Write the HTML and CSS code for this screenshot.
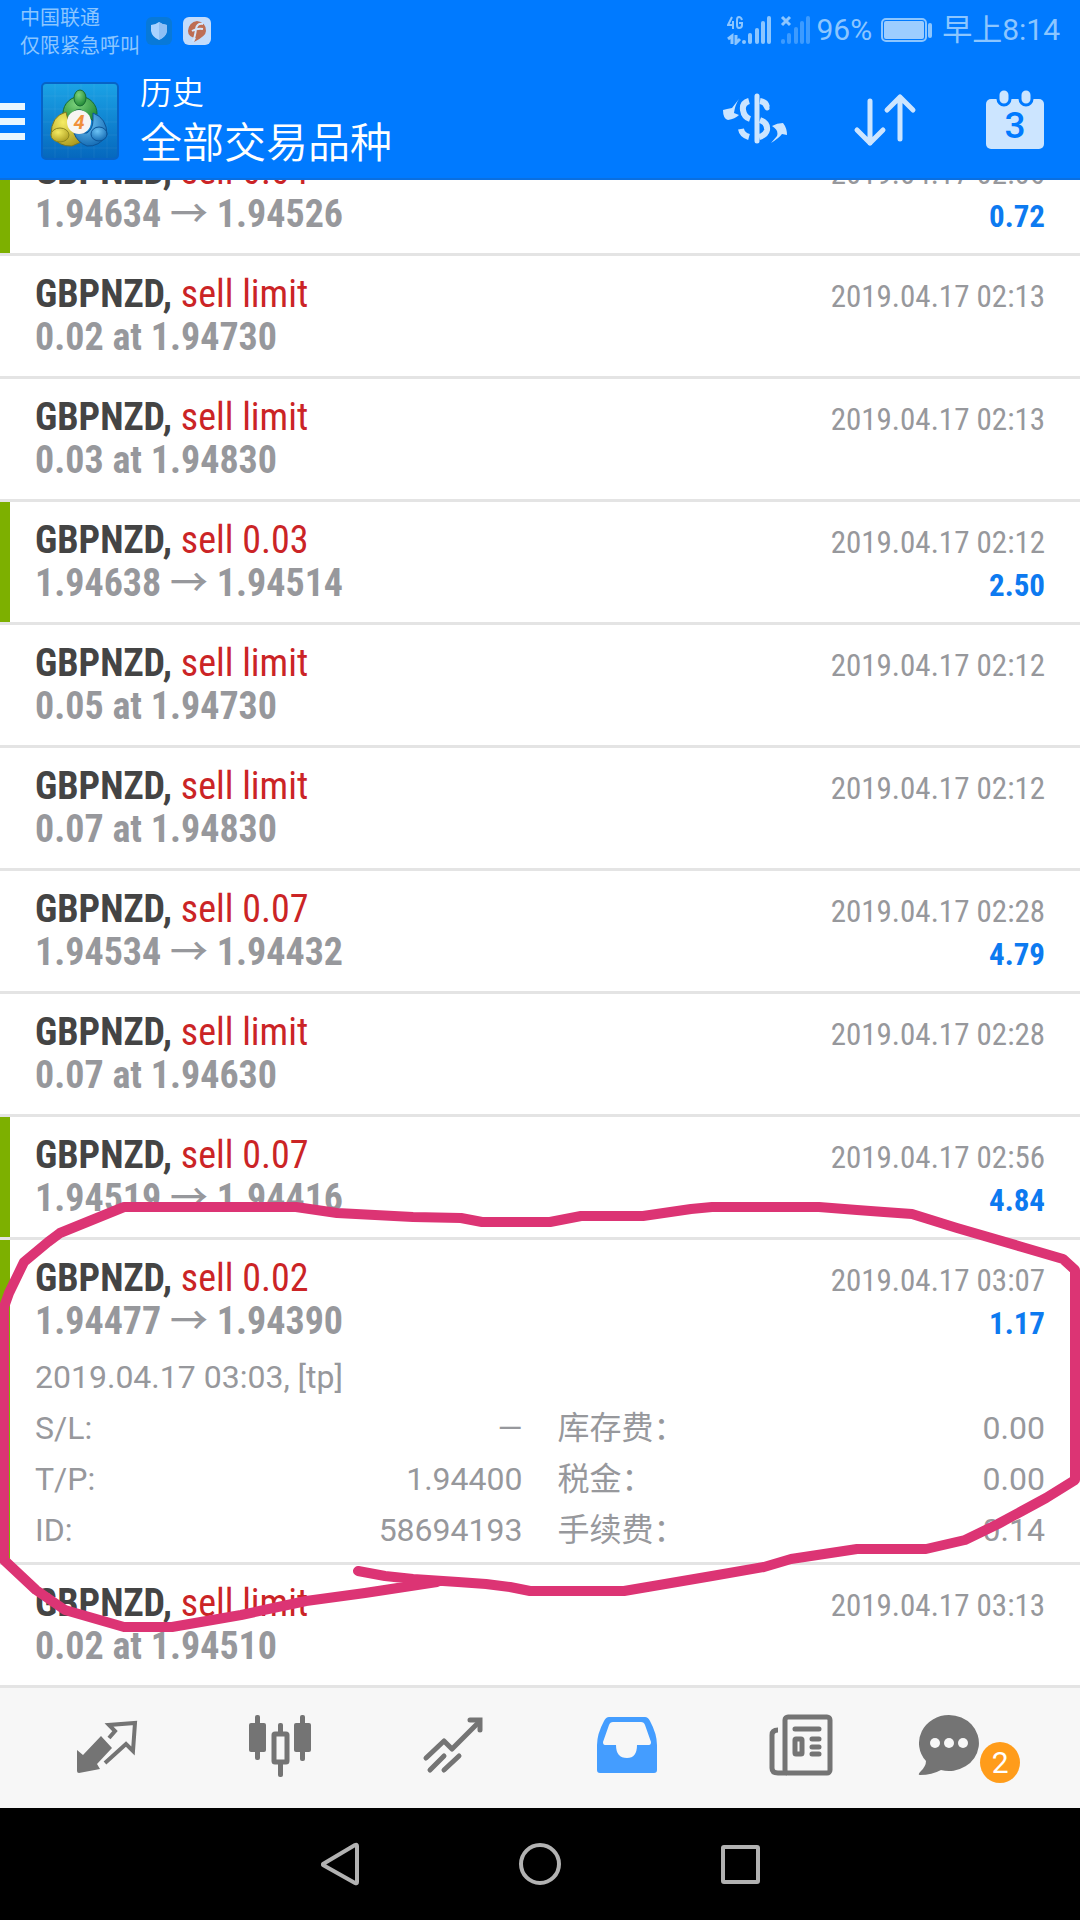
FILE: index.html
```html
<!DOCTYPE html>
<html lang="zh-CN">
<head>
<meta charset="utf-8">
<meta name="viewport" content="width=device-width, initial-scale=1">
<title>历史</title>
<link rel="stylesheet" href="styles.css">
</head>
<body>
<div class="screen">
  <div class="top">
    <div class="status">
      <div class="carrier"><span>中国联通</span><span>仅限紧急呼叫</span></div>
      <svg class="notice" width="26" height="28" viewBox="0 0 26 28"><rect width="26" height="28" rx="6" fill="#0879d8"/><path d="M13 5Q17 8 21 8V14Q20 20 13 23Q6 20 5 14V8Q9 8 13 5Z" fill="#a9d2ff"/><path d="M13 5Q17 8 21 8V14Q20 20 13 23Z" fill="#8ec0f5"/></svg>
      <svg class="notice" width="28" height="28" viewBox="0 0 28 28"><rect width="28" height="28" rx="6" fill="#c3dcfb"/><path d="M14 4A10 9 0 0 1 23 14Q23 19 11 25L13 21Q5 20 5 14A10 10 0 0 1 14 4Z" fill="#bd6d54"/><path d="M10 24Q12 20 13 12Q14 6 20 7M9 14Q14 11 20 12" fill="none" stroke="#d6e6fb" stroke-width="2"/></svg>
      <div class="status-right">
        <svg width="84" height="30" viewBox="0 0 84 30" fill="#8cc6ff">
          <g fill="none" stroke="#8cc6ff" stroke-width="2"><path d="M5 2L1 10H7M6 6V14M15 5Q14 2 12 2Q10 2 10 5V10Q10 13 12 13Q15 13 15 10V8H12"/><path d="M1 24L5 21V29M9 20V28L13 24" stroke-width="3"/></g>
          <rect x="15" y="25" width="4" height="4" rx="2"/><rect x="21" y="18" width="4" height="11" rx="2"/><rect x="28" y="13" width="4" height="16" rx="2"/><rect x="34" y="6" width="4" height="23" rx="2"/><rect x="40" y="1" width="4" height="28" rx="2"/>
          <path d="M55 2L63 10M63 2L55 10" stroke="#8cc6ff" stroke-width="3"/>
          <g fill="#3d9bff"><rect x="54" y="24" width="4" height="5" rx="2"/><rect x="60" y="18" width="4" height="11" rx="2"/><rect x="67" y="12" width="4" height="17" rx="2"/><rect x="73" y="6" width="4" height="23" rx="2"/><rect x="79" y="1" width="4" height="28" rx="2"/></g>
        </svg>
        <span class="percent">96%</span>
        <svg width="52" height="24" viewBox="0 0 52 24"><rect x="1" y="1" width="44" height="22" rx="4" fill="none" stroke="#8cc6ff" stroke-width="2"/><rect x="3" y="3" width="40" height="18" rx="2" fill="#9ccdff"/><rect x="47" y="5" width="4" height="15" rx="2" fill="#8cc6ff"/></svg>
        <span>早上8:14</span>
      </div>
    </div>
    <header class="bar">
      <button class="menu" aria-label="菜单"><i></i><i></i><i></i></button>
      <svg class="logo" width="78" height="78" viewBox="0 0 78 78">
        <defs>
          <linearGradient id="sky" x1="0" y1="0" x2="0" y2="1"><stop offset="0" stop-color="#1ba3e6"/><stop offset="1" stop-color="#0567bd"/></linearGradient>
          <radialGradient id="green" cx=".4" cy=".3" r=".8"><stop offset="0" stop-color="#7dd37c"/><stop offset="1" stop-color="#15802d"/></radialGradient>
          <radialGradient id="gold" cx=".4" cy=".3" r=".8"><stop offset="0" stop-color="#f5ec63"/><stop offset="1" stop-color="#a7961c"/></radialGradient>
          <radialGradient id="blue" cx=".4" cy=".3" r=".8"><stop offset="0" stop-color="#6cc3f5"/><stop offset="1" stop-color="#0b62ad"/></radialGradient>
        </defs>
        <rect x="1" y="1" width="76" height="76" rx="4" fill="url(#sky)" stroke="#0763c6" stroke-width="2"/>
        <path d="M14 2V76M27 2V76M40 2V76M53 2V76M66 2V76M2 14H76M2 27H76M2 40H76M2 53H76M2 66H76" stroke="#fff" stroke-opacity=".06"/>
        <path d="M22 31A17 17 0 0 1 56 32L53 40L46 33Q39 23 31 31L26 38Z" fill="url(#green)" stroke="#176b33"/>
        <path d="M25 30Q10 34 10 53Q18 65 31 64L40 60L33 50Q27 47 27 38Z" fill="url(#gold)" stroke="#7d7720"/>
        <path d="M52 31Q66 36 66 53Q58 65 46 64Q36 60 33 51L46 51Q52 47 52 38Z" fill="url(#blue)" stroke="#0d5396"/>
        <ellipse cx="39" cy="16" rx="6" ry="8" fill="url(#green)" stroke="#176b33"/>
        <ellipse cx="19" cy="53" rx="9" ry="7" fill="url(#gold)" stroke="#8b851e"/>
        <ellipse cx="58" cy="52" rx="8" ry="7" fill="url(#blue)" stroke="#0d5396"/>
        <circle cx="38" cy="40" r="12" fill="#f7f5f3"/>
        <text x="38" y="47" text-anchor="middle" class="logo-text">4</text>
      </svg>
      <h1 class="title"><small>历史</small><span>全部交易品种</span></h1>
      <div class="tools">
        <button aria-label="货币"><svg width="68" height="64" viewBox="0 0 68 64" fill="none" stroke="#cce5ff" stroke-width="5" stroke-linecap="round"><path d="M36 9V54"/><path d="M46 20Q45 15 39 14M28 14Q21 16 22 23Q23 30 29 32M39 33Q47 36 46 43Q45 48 38 50M28 50Q21 48 20 42" stroke-linecap="butt" stroke-width="6"/><path d="M46 21L45 19" /><path d="M18 12L11 21L6 22L2 23Q2 32 7 33Q14 32 18 28L13 26Q14 18 18 12ZM50 56L56 49Q58 43 51 39Q56 36 62 36Q66 41 66 48L61 47Q58 51 50 56Z" fill="#cce5ff" stroke="none"/></svg></button>
        <button aria-label="排序"><svg width="68" height="64" viewBox="0 0 68 64" fill="none" stroke="#cce5ff" stroke-width="5" stroke-linecap="round" stroke-linejoin="round"><path d="M19 14V56M6 43L19 56L32 43M49 52V10M36 23L49 10L62 23"/></svg></button>
        <button aria-label="日期"><svg width="68" height="64" viewBox="0 0 68 64"><rect x="5" y="12" width="58" height="50" rx="5" fill="#cce5ff"/><g fill="#cce5ff" stroke="#007aff" stroke-width="3"><rect x="17" y="2" width="12" height="16" rx="6"/><rect x="39" y="2" width="12" height="16" rx="6"/></g><text x="34" y="51" text-anchor="middle" class="cal-text">3</text></svg></button>
      </div>
    </header>
  </div>

  <main class="history">
    <ul class="deals">
      <li class="deal win"><div><b>GBPNZD,</b> <em>sell 0.04</em></div><time>2019.04.17 02:06</time><div class="price">1.94634 <i>→</i> 1.94526</div><strong>0.72</strong></li>
      <li class="deal"><div><b>GBPNZD,</b> <em>sell limit</em></div><time>2019.04.17 02:13</time><div class="price">0.02 at 1.94730</div></li>
      <li class="deal"><div><b>GBPNZD,</b> <em>sell limit</em></div><time>2019.04.17 02:13</time><div class="price">0.03 at 1.94830</div></li>
      <li class="deal win"><div><b>GBPNZD,</b> <em>sell 0.03</em></div><time>2019.04.17 02:12</time><div class="price">1.94638 <i>→</i> 1.94514</div><strong>2.50</strong></li>
      <li class="deal"><div><b>GBPNZD,</b> <em>sell limit</em></div><time>2019.04.17 02:12</time><div class="price">0.05 at 1.94730</div></li>
      <li class="deal"><div><b>GBPNZD,</b> <em>sell limit</em></div><time>2019.04.17 02:12</time><div class="price">0.07 at 1.94830</div></li>
      <li class="deal"><div><b>GBPNZD,</b> <em>sell 0.07</em></div><time>2019.04.17 02:28</time><div class="price">1.94534 <i>→</i> 1.94432</div><strong>4.79</strong></li>
      <li class="deal"><div><b>GBPNZD,</b> <em>sell limit</em></div><time>2019.04.17 02:28</time><div class="price">0.07 at 1.94630</div></li>
      <li class="deal win"><div><b>GBPNZD,</b> <em>sell 0.07</em></div><time>2019.04.17 02:56</time><div class="price">1.94519 <i>→</i> 1.94416</div><strong>4.84</strong></li>
      <li class="deal win open"><div><b>GBPNZD,</b> <em>sell 0.02</em></div><time>2019.04.17 03:07</time><div class="price">1.94477 <i>→</i> 1.94390</div><strong>1.17</strong>
        <div class="details">
          <p>2019.04.17 03:03, [tp]</p>
          <dl>
            <div><dt>S/L:</dt><dd>—</dd></div><div><dt>库存费：</dt><dd>0.00</dd></div>
            <div><dt>T/P:</dt><dd>1.94400</dd></div><div><dt>税金：</dt><dd>0.00</dd></div>
            <div><dt>ID:</dt><dd>58694193</dd></div><div><dt>手续费：</dt><dd>0.14</dd></div>
          </dl>
        </div>
        <svg class="marker" viewBox="0 0 1080 440" preserveAspectRatio="none"><path d="M358 371L385 376L413 379L458 382L486 384L510 387L530 391H624L671 383L712 376L764 367L791 359L857 349H926L965 340L998 324L1022 311L1046 298L1075 280V70L1063 59L1022 47L957 28L912 14L884 12L857 10L819 7H712L691 9L643 16H581L550 22H482L461 18L413 17L337 13L296 7H124L60 33L48 42L24 62L9 93L4 107V360L36 390L65 410L124 427H172L241 415L306 401L365 393L437 382"/></svg>
      </li>
      <li class="deal"><div><b>GBPNZD,</b> <em>sell limit</em></div><time>2019.04.17 03:13</time><div class="price">0.02 at 1.94510</div></li>
    </ul>
  </main>

  <nav class="tabs">
    <button aria-label="报价"><svg viewBox="0 0 64 68"><path d="M2 36L8 41L26 22L37 34L22 50L25 55L4 59Q2 59 2 57Z" fill="#747474"/><path d="M34 24L40 17L34 11L60 9L58 37L51 30L30 49" fill="none" stroke="#747474" stroke-width="4"/></svg></button>
    <button aria-label="图表"><svg viewBox="0 0 64 68" fill="#747474"><rect x="1" y="9" width="17" height="29" rx="2"/><rect x="7" y="1" width="5" height="45" rx="2"/><rect x="46" y="9" width="17" height="29" rx="2"/><rect x="52" y="1" width="5" height="46" rx="2"/><rect x="30" y="9" width="5" height="12" rx="2"/><rect x="30" y="48" width="5" height="15" rx="2"/><rect x="26" y="20" width="13" height="28" rx="1" fill="none" stroke="#747474" stroke-width="5"/></svg></button>
    <button aria-label="交易"><svg viewBox="0 0 64 68" fill="none" stroke="#747474" stroke-width="5" stroke-linecap="round" stroke-linejoin="round"><path d="M4 44L22 27L30 35L56 9"/><path d="M48 6H58V16" stroke-linejoin="miter"/><path d="M8 56L22 42M22 56L37 42"/></svg></button>
    <button aria-label="历史" aria-current="page"><svg viewBox="0 0 64 68"><path fill-rule="evenodd" fill="#449dff" d="M13 3H49Q52 3 54 7Q61 20 61 31V56Q61 59 58 59H4Q1 59 1 56V31Q1 20 8 7Q10 3 13 3ZM17 8Q14 8 13 11L7 28Q7 31 9 31H20Q20 44 31 44Q41 44 41 31H53Q55 31 55 28L49 11Q48 8 45 8Z"/></svg></button>
    <button aria-label="新闻"><svg viewBox="0 0 64 68" fill="none" stroke="#747474" stroke-width="5"><rect x="16" y="3" width="45" height="56" rx="3"/><path d="M9 16Q3 16 3 21V54Q3 59 9 59H18"/><path d="M26 15H50M43 25H50M43 33H50M43 40H50" stroke-linecap="round"/><rect x="26" y="25" width="7" height="15" rx="1"/></svg></button>
    <button class="mail" aria-label="邮箱"><svg viewBox="0 0 64 68"><path d="M32 1A30 28 0 1 1 24 56Q15 61 3 61Q0 61 4 57Q9 52 9 47A30 28 0 0 1 32 1Z" fill="#747474"/><g fill="#f7f7f7"><circle cx="18" cy="29" r="5"/><circle cx="32" cy="29" r="5"/><circle cx="46" cy="29" r="5"/></g></svg><span class="badge">2</span></button>
  </nav>

  <div class="system">
    <button aria-label="返回"><svg width="44" height="44" viewBox="0 0 44 44"><path d="M5 22L37 3Q39 2 39 4V40Q39 42 37 41L5 23Z"/></svg></button>
    <button aria-label="主屏幕"><svg width="44" height="44" viewBox="0 0 44 44"><circle cx="22" cy="22" r="19"/></svg></button>
    <button aria-label="最近任务"><svg width="44" height="44" viewBox="0 0 44 44"><rect x="5" y="5" width="35" height="35" rx="1"/></svg></button>
  </div>
</div>
</body>
</html>
```
FILE: styles.css
```css
* { box-sizing: border-box; }
body, h1, ul, dl, dd, p { margin: 0; padding: 0; }
body { font-family: Roboto, "Noto Sans CJK SC", sans-serif; background: #000; }
button { padding: 0; border: 0; background: none; font: inherit; }
svg { display: block; flex: none; }
em, i { font-style: normal; }

.screen { display: flex; flex-direction: column; height: 100vh; }

/* Status bar and title bar */
.top { background: #007aff; border-bottom: 2px solid #0a6fe0; }
.status { display: flex; align-items: flex-start; height: 64px; padding: 4px 20px 0; color: #8cc6ff; }
.carrier { display: flex; flex-direction: column; font-size: 20px; line-height: 28px; font-weight: 400; margin-right: 6px; }
.notice { margin: 13px 11px 0 0; }
.status-right { display: flex; align-items: center; margin-left: auto; height: 52px; gap: 9px; font-size: 30px; line-height: 52px; font-weight: 400; }
.percent { margin-left: -4px; }
.bar { display: flex; align-items: center; height: 114px; padding-right: 31px; color: #fff; }
.menu { display: flex; flex-direction: column; gap: 8px; width: 25px; margin-right: 16px; }
.menu i { height: 7px; background: #e8f6ff; }
.title { display: flex; flex-direction: column; margin-left: 21px; padding-top: 4px; font-weight: 350; font-size: 42px; line-height: 60px; }
.title small { font-size: 32px; line-height: 42px; }
.tools { display: flex; gap: 62px; margin-left: auto; padding-bottom: 5px; }
.logo-text { font: italic 700 20px Roboto, sans-serif; fill: #f0903a; }
.cal-text { font: 500 37px Roboto, sans-serif; fill: #007aff; }

/* Deals, scrolled to the end */
.history { flex: 1; min-height: 0; display: flex; flex-direction: column; justify-content: flex-end; overflow: hidden; background: #fff; }
.deals { list-style: none; }
.deal { position: relative; display: grid; grid-template-columns: 1fr auto; grid-template-rows: 43px 43px; align-items: baseline; min-height: 123px; padding: 17px 35px; border-bottom: 3px solid #e4e4e4; font-family: "Roboto Condensed", Roboto, sans-serif; font-size: 38px; line-height: 43px; }
.win::before { content: ""; position: absolute; left: 0; top: 0; bottom: 0; width: 10px; background: #7db000; }
.deal b { color: #444; }
.deal em { color: #cb2426; }
.deal time, .deal strong { font-size: 31px; text-align: right; }
.deal time, .price { color: #97989c; }
.price { font-weight: 700; }
.price i { font-family: "Noto Sans CJK SC", sans-serif; font-weight: 500; line-height: 1px; }
.deal strong { color: #0d7af0; }
.open { padding-bottom: 6px; }
.details { grid-column: 1 / -1; margin-top: 9px; font-family: Roboto, "Noto Sans CJK SC", sans-serif; font-size: 32px; font-weight: 400; line-height: 51px; color: #97989c; }
.details dl { display: grid; grid-template-columns: 1fr 1fr; column-gap: 35px; }
.details dl div { display: flex; justify-content: space-between; height: 51px; }
.marker { position: absolute; left: 0; top: -40px; width: 100%; height: 440px; z-index: 1; fill: none; stroke: #dc3474; stroke-width: 10; stroke-linejoin: round; stroke-linecap: round; pointer-events: none; }

/* App tabs */
.tabs { display: grid; grid-template-columns: repeat(6, 1fr); align-items: center; height: 120px; padding: 0 18px 0 20px; background: #f7f7f7; }
.tabs button { display: flex; justify-content: center; position: relative; }
.tabs svg { width: 64px; height: 68px; }
.mail { padding-right: 52px; }
.badge { position: absolute; left: 50%; margin-left: 5px; top: 28px; width: 40px; height: 41px; border-radius: 50%; background: #ff9c1a; color: #fff; font-size: 30px; line-height: 42px; text-align: center; }

/* Phone keys */
.system { display: flex; justify-content: center; align-items: center; height: 112px; background: #000; }
.system button { display: flex; justify-content: center; width: 200px; }
.system svg { fill: none; stroke: #b2b2b2; stroke-width: 4; stroke-linejoin: round; }
```
